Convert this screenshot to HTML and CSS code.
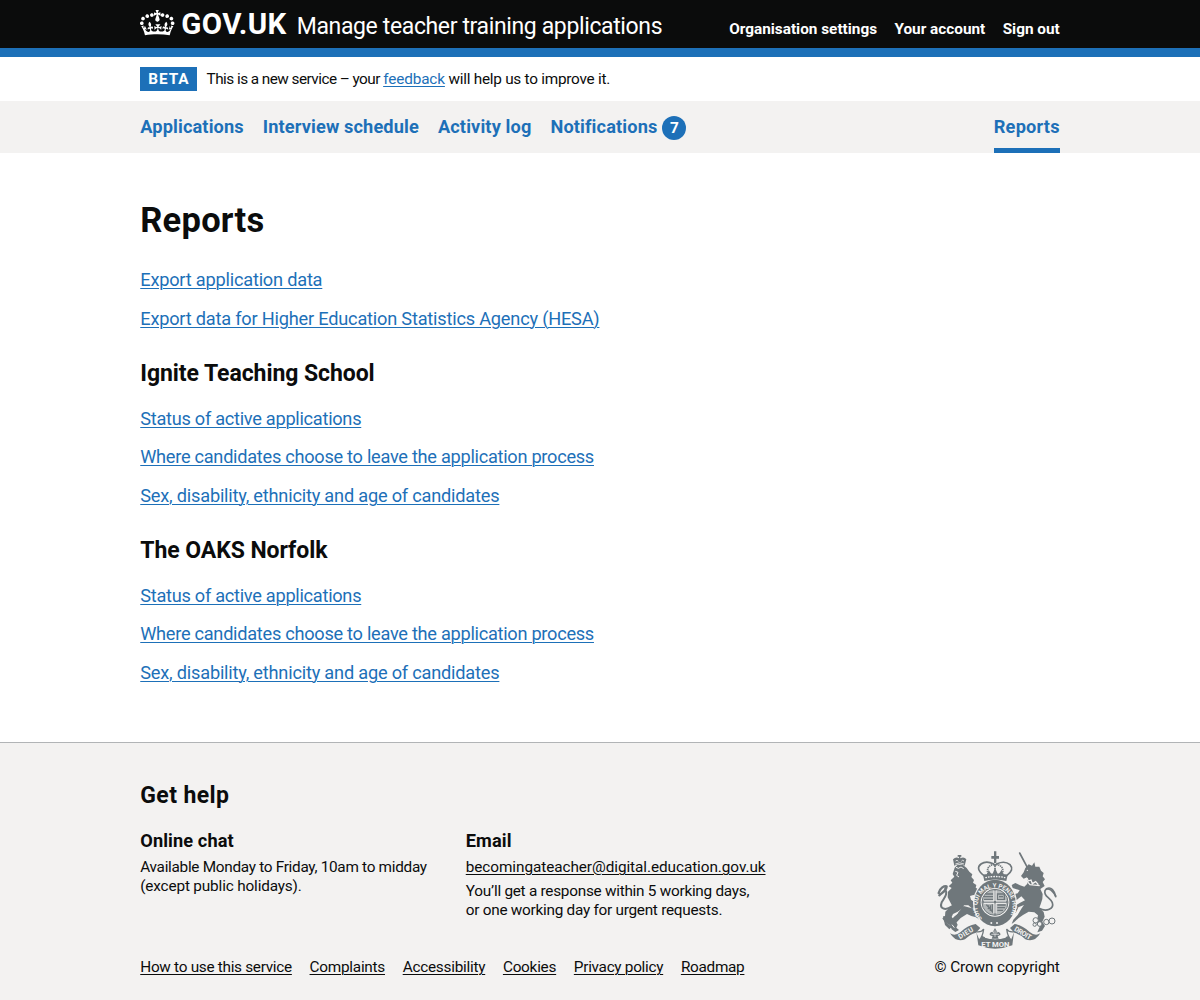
FILE: index.html
```html
<!DOCTYPE html>
<html lang="en">
<head>
<meta charset="utf-8">
<title>Reports - Manage teacher training applications - GOV.UK</title>
<link rel="stylesheet" href="styles.css">
</head>
<body>
<header class="header">
  <div class="container header-inner">
    <a class="logo" href="#">
      <svg class="crown" viewBox="0 0 36 32" aria-hidden="true"><path fill="currentColor" d="M6.7 12.2c1 .4 2.1-.1 2.5-1s-.1-2.1-1-2.5c-1-.4-2.1.1-2.5 1-.4 1 0 2.1 1 2.5m-4.3 2.5c1 .4 2.1-.1 2.5-1s-.1-2.1-1-2.5c-1-.4-2.1.1-2.5 1-.5 1 0 2.1 1 2.5m-1.3 4.8c1 .4 2.1-.1 2.5-1 .4-1-.1-2.1-1-2.5-1-.4-2.1.1-2.5 1-.5 1 0 2.1 1 2.5m10.4-8.4c1 .4 2.1-.1 2.5-1s-.1-2.1-1-2.5c-1-.4-2.1.1-2.5 1s0 2.1 1 2.5m17.2 1.1c-1 .4-2.1-.1-2.5-1s.1-2.1 1-2.5c1-.4 2.1.1 2.5 1 .5 1 0 2.1-1 2.5m4.3 2.5c-1 .4-2.1-.1-2.5-1s.1-2.1 1-2.5c1-.4 2.1.1 2.5 1 .5 1 0 2.1-1 2.5m1.3 4.8c-1 .4-2.1-.1-2.5-1-.4-1 .1-2.1 1-2.5 1-.4 2.1.1 2.5 1 .4 1 0 2.1-1 2.5M23.9 11.1c-1 .4-2.1-.1-2.5-1s.1-2.1 1-2.5c1-.4 2.1.1 2.5 1s0 2.1-1 2.5M18.6 8.8l2.4 1.3V6.5l-2.4.8c-.1-.1-.1-.2-.2-.3s1-3 1-3h-3.4l1 3c-.1.1-.2.2-.2.3-.1.1-2.4-.7-2.4-.7v3.5L17 8.8c.1.1.1.2.2.3l-1.4 4.2c-.1.2-.1.4-.1.6 0 1.1.8 2 1.9 2.2h.7c1-.2 1.9-1.1 1.9-2.1 0-.2 0-.4-.1-.6l-1.4-4.2c-.1-.2 0-.3-.1-.4M17.8 29.1c4.6 0 8.9.3 12.8.9 1.1-4.6 2.4-7.2 3.8-9.1l-2.6-.9c.3 1.3.3 1.9 0 2.8-.4-.4-.8-1.2-1.1-2.4l-1.2 4.2c.8-.5 1.4-.9 2-.9-1.2 2.6-2.7 3.2-3.6 3-1.2-.2-1.7-1.3-1.5-2.2.3-1.3 1.6-1.6 2.2-.1 1.2-2.4-.8-3.1-2.1-2.4 1.9-1.9 2.2-3.6.6-5.7-2.2 1.7-2.2 3.3-1.2 5.6-1.3-1.5-3.3-.7-2.5 1.7.9-1.4 2.1-.5 2 .8-.2 1.2-1.7 2.1-3.7 1.9-2.8-.2-2.9-2.2-2.9-3.7.7-.1 1.9.5 3 2l.4-4.3c-1.1 1.1-2.1 1.4-3.2 1.4.4-1.2 2.1-3 2.1-3h-5.4s1.7 1.9 2.1 3c-1.1 0-2.1-.2-3.2-1.4l.4 4.3c1.1-1.5 2.3-2.1 3-2-.1 1.6-.2 3.5-2.9 3.7-1.9.2-3.5-.7-3.7-1.9-.2-1.3 1-2.2 1.9-.8.7-2.3-1.2-3.1-2.5-1.7 1-2.3 1-3.9-1.1-5.6-1.6 2.1-1.3 3.8.6 5.7-1.3-.7-3.2 0-2.1 2.4.6-1.5 1.9-1.1 2.2.1.2.9-.4 1.9-1.5 2.2-1 .2-2.5-.5-3.7-3 .7 0 1.3.4 2 .9L5 20.4c-.3 1.2-.7 1.9-1.2 2.4-.3-.8-.2-1.5 0-2.8l-2.6.9C2.7 22.8 4 25.4 5.1 30c3.8-.5 8.2-.9 12.7-.9"/></svg>
      <span class="logo-text">GOV.UK</span>
    </a>
    <a class="service-name" href="#">Manage teacher training applications</a>
    <nav class="account-nav">
      <a href="#">Organisation settings</a>
      <a href="#">Your account</a>
      <a href="#">Sign out</a>
    </nav>
  </div>
</header>
<div class="phase container">
  <strong class="tag">BETA</strong>
  <span class="phase-text"><span class="phase-lead">This is a new service – your </span><a href="#">feedback</a> will help us to improve it.</span>
</div>
<nav class="primary-nav">
  <div class="container primary-inner">
    <a href="#">Applications</a>
    <a href="#">Interview schedule</a>
    <a href="#">Activity log</a>
    <a class="with-count" href="#">Notifications <span class="count">7</span></a>
    <a class="current" href="#">Reports</a>
  </div>
</nav>
<main class="container main">
  <h1>Reports</h1>
  <ul class="links">
    <li><a href="#">Export application data</a></li>
    <li><a href="#">Export data for Higher Education Statistics Agency (HESA)</a></li>
  </ul>
  <h2>Ignite Teaching School</h2>
  <ul class="links">
    <li><a class="snug" href="#">Status of active applications</a></li>
    <li><a class="snug" href="#">Where candidates choose to leave the application process</a></li>
    <li><a href="#">Sex, disability, ethnicity and age of candidates</a></li>
  </ul>
  <h2>The OAKS Norfolk</h2>
  <ul class="links">
    <li><a class="snug" href="#">Status of active applications</a></li>
    <li><a class="snug" href="#">Where candidates choose to leave the application process</a></li>
    <li><a href="#">Sex, disability, ethnicity and age of candidates</a></li>
  </ul>
</main>
<footer class="footer">
  <div class="container footer-inner">
    <div class="help">
      <h2>Get help</h2>
      <div class="help-columns">
        <section>
          <h3>Online chat</h3>
          <p class="tight">Available Monday to Friday, 10am to midday<br><span class="loose">(except public holidays).</span></p>
        </section>
        <section>
          <h3>Email</h3>
          <p><a class="email" href="#">becomingateacher@digital.education.gov.uk</a></p>
          <p class="snug">You’ll get a response within 5 working days,<br>or one working day for urgent requests.</p>
        </section>
      </div>
      <div class="meta-links">
        <a class="tight" href="#">How to use this service</a>
        <a href="#">Complaints</a>
        <a href="#">Accessibility</a>
        <a href="#">Cookies</a>
        <a class="tight" href="#">Privacy policy</a>
        <a class="tight" href="#">Roadmap</a>
      </div>
    </div>
    <a class="copyright" href="#">
      <svg class="arms" viewBox="21 15 360 300" aria-hidden="true">
        <defs>
          <path id="garter" d="M157 221A53 55 0 1 1 233 221"/>
        </defs>
        <g fill="none" stroke="#6f777b" stroke-linecap="round" stroke-linejoin="round">
          <!-- tails -->
          <path stroke-width="6" d="M66 184C44 199 28 190 35 172C43 158 55 147 45 132"/>
          <path stroke-width="7" d="M26 144C31 128 42 123 50 124C49 137 38 142 28 151"/>
          <path stroke-width="5" d="M327 190C350 202 373 191 367 173C360 157 340 154 345 137C350 127 364 130 377 153"/>
          <path stroke-width="5" d="M350 131C363 124 374 137 377 155"/>
        </g>
        <!-- lion -->
        <g fill="#6f777b">
          <path d="M74 68L82 60H99L110 69L118 80L127 88L124 96L132 105L129 113L139 120L137 128L147 134L145 144L158 153L153 160L142 154L130 150L120 153L123 164L145 180L139 188L148 196L157 202L154 208L141 206L129 193L115 181L102 181L98 190L83 200L69 207L65 216L77 228L83 239L79 248L87 255L76 261L65 253L60 241L44 230L37 220L45 214L46 200L57 189L67 184L60 170L53 157L54 140L65 129L56 124L67 113L62 106L73 95L68 87Z"/>
          <path d="M101 183L126 190L140 203L153 210L149 226L138 217L124 213L111 207L92 219L78 234L68 220L83 205Z"/>
          <path d="M39 214L52 213L49 232L65 246L58 253L45 240Z"/>
          <path d="M73 62L69 43Q78 34 87 40V35H83V30H94V35H91V40Q102 34 109 43L104 62Q88 54 73 62Z"/>
        </g>
        <path d="M77 48Q81 43 85 49M94 49Q98 43 102 48M76 57Q89 50 102 57" fill="none" stroke="#f3f2f1" stroke-width="2.5"/>
        <path d="M78 67L85 70L93 66L101 71M76 79L84 82L80 91L87 96" fill="none" stroke="#f3f2f1" stroke-width="3"/>
        <path d="M67 216L83 205M66 239L73 248" fill="none" stroke="#f3f2f1" stroke-width="3"/>
        <!-- unicorn -->
        <path d="M269 24L292 67" stroke="#6f777b" stroke-width="5" stroke-linecap="round"/>
        <g fill="#6f777b">
          <path d="M286 69L296 58L306 62L313 52L316 65L328 65L333 77L341 84L338 94L345 103L338 111L344 123L331 132L338 147L337 162L332 178L328 188L341 201L344 215L337 230L345 243L336 257L322 262L329 245L320 230L324 211L313 202L296 200L279 210L266 219L253 231L245 237L250 224L263 210L275 190L282 180L265 187L259 201L249 207L252 185L269 174L285 166L274 154L260 165L246 159L252 148L263 145L269 136L248 129L245 120L256 114L270 121L283 125L292 116L291 97L281 101L273 93L281 82Z"/>
        </g>
        <path d="M286 103L300 119L329 122M291 99L295 108L303 105L307 116L317 110L325 119" fill="none" stroke="#f3f2f1" stroke-width="4"/>
        <circle cx="292" cy="76" r="2" fill="#f3f2f1"/>
        <g fill="#f3f2f1" stroke="#6f777b" stroke-width="3">
          <circle cx="317" cy="226" r="8"/><circle cx="329" cy="237" r="7"/><circle cx="314" cy="239" r="5"/><circle cx="349" cy="231" r="8"/><circle cx="366" cy="228" r="9"/>
        </g>
        <!-- shield and garter -->
        <ellipse cx="195" cy="174" rx="66" ry="73" fill="#f3f2f1"/>
        <ellipse cx="195" cy="174" rx="62" ry="70" fill="#6f777b"/>
        <circle cx="195" cy="172" r="43" fill="#f3f2f1"/>
        <circle cx="195" cy="172" r="39" fill="#b3b7b8" stroke="#6f777b" stroke-width="3"/>
        <g fill="none" stroke="#6f777b" stroke-width="4">
          <path d="M195 134V210M157 171H233"/>
          <path d="M166 147H189M162 155H189M162 163H189M202 147H223V164H202ZM207 155H219M202 180H227M202 188H225M202 196H219M169 179L187 200V178M175 181V193M181 181V198"/>
        </g>
        <path d="M192 137V168H162M198 137V168H228M162 175H192V205M228 175H198V205" fill="none" stroke="#f3f2f1" stroke-width="3"/>
        <text class="arms-motto"><textPath href="#garter">SOIT QUI MAL Y PENSE HONI</textPath></text>
        <circle cx="184" cy="234" r="3" fill="#f3f2f1"/><circle cx="201" cy="234" r="3" fill="#f3f2f1"/>
        <!-- royal crown -->
        <g fill="#f3f2f1" stroke="#6f777b" stroke-width="5">
          <path d="M161 91Q135 71 153 57Q168 46 190 56L195 61L201 56Q225 46 240 59Q254 75 230 92Z"/>
          <path d="M174 87Q167 63 192 58M217 87Q224 63 199 58M195 57V88" fill="none" stroke-dasharray="4 2"/>
        </g>
        <path d="M159 89Q195 80 233 89L229 108Q195 99 163 108ZM192 54V41H184V33H192V19H199V33H207V41H199V54ZM172 87L176 75L184 87M188 86L195 68L203 86M207 86L215 74L220 87" fill="#6f777b"/>
        <path d="M166 98Q195 91 226 98" fill="none" stroke="#f3f2f1" stroke-width="4" stroke-dasharray="5 3"/>
        <!-- motto ribbon -->
        <g fill="#6f777b">
          <path d="M60 265Q75 275 92 261Q114 240 137 237L151 249L138 263Q119 268 105 283Q78 294 60 265Z"/>
          <path d="M331 265Q316 275 299 261Q277 240 254 237L240 249L253 263Q272 268 286 283Q313 294 331 265Z"/>
          <path d="M139 260Q148 270 165 277Q195 288 226 277Q243 271 252 260L247 301Q195 321 145 301Z"/>
        </g>
        <path d="M138 260Q154 263 161 252Q158 276 148 284M253 260Q237 263 230 252Q233 276 243 284" fill="#f3f2f1" stroke="#6f777b" stroke-width="4"/>
        <path d="M165 278V256H227V278Q195 288 165 278Z" fill="#f3f2f1"/>
        <path d="M192 267L187 260Q176 263 180 271L188 274L185 281H206L203 274L211 270Q213 262 203 260L200 267V258L195 249L190 258Z" fill="#6f777b"/>
        <path d="M195 256V276M184 268H207" stroke="#f3f2f1" stroke-width="2"/>
        <text class="arms-words" transform="translate(90 283) rotate(-31)" textLength="49">DIEU</text>
        <text class="arms-words" transform="translate(251 256) rotate(31)" textLength="56">DROIT</text>
        <text class="arms-words base" x="154" y="305" textLength="84">ET MON</text>
      </svg>
      <span>© Crown copyright</span>
    </a>
  </div>
</footer>
</body>
</html>
```
FILE: styles.css
```css
* { box-sizing: border-box; }
body {
  margin: 0;
  background: #fff;
  color: #0b0c0c;
  font: 18.2px/24px Roboto, "Noto Sans", sans-serif;
}
h1, h2, h3, p, ul { margin: 0; padding: 0; }
ul { list-style: none; }
a {
  color: #1d70b8;
  text-decoration-thickness: 1px;
  text-underline-offset: 2px;
}
.container { width: 919.5px; margin: 0 auto; }

.header {
  height: 57px;
  background: #0b0c0c;
  border-bottom: 9px solid #1d70b8;
}
.header a { color: #fff; text-decoration: none; white-space: nowrap; }
.header-inner { display: flex; align-items: flex-start; padding-top: 6px; }
.logo { display: flex; align-items: flex-start; width: 156.5px; }
.crown { display: block; width: 35px; height: 31.1px; margin-right: 6px; }
.logo-text { padding-top: 0.5px; font-size: 29.5px; font-weight: 700; line-height: 35px; letter-spacing: 0.4px; }
.service-name { padding-top: 5.5px; font-size: 23px; line-height: 29px; letter-spacing: -0.37px; }
.account-nav {
  display: flex;
  gap: 17.4px;
  margin-left: auto;
  padding-top: 13.6px;
  font-size: 15.33px;
  font-weight: 700;
  line-height: 19px;
}

.phase { display: flex; align-items: center; height: 43.5px; font-size: 15.33px; line-height: 19px; }
.tag {
  height: 24px;
  margin-right: 9.5px;
  padding: 0 7.5px 0 8px;
  background: #1d70b8;
  color: #fff;
  font-size: 15.33px;
  font-weight: 700;
  line-height: 24px;
  letter-spacing: 0.95px;
}
.phase-text { padding-top: 1px; letter-spacing: -0.25px; }
.phase-lead { letter-spacing: -0.54px; }
.phase-text a { letter-spacing: -0.13px; }

.primary-nav { background: #f3f2f1; }
.primary-inner { display: flex; gap: 19px; height: 52.5px; padding-top: 14.3px; }
.primary-inner a {
  font-weight: 700;
  letter-spacing: 0.125px;
  text-decoration: none;
  white-space: nowrap;
}
.with-count { display: flex; gap: 5px; }
.count {
  width: 24px;
  height: 24px;
  margin-top: 0.9px;
  border-radius: 50%;
  background: #1d70b8;
  color: #fff;
  font-size: 15.33px;
  text-align: center;
}
.primary-inner .current { margin-left: auto; border-bottom: 5px solid #1d70b8; letter-spacing: 0.2px; }

.main { padding: 48px 0 57px; }
h1 { margin-bottom: 29px; font-size: 34.5px; line-height: 38.3px; letter-spacing: 0.25px; }
h2 { font-size: 23px; line-height: 28.7px; letter-spacing: -0.07px; }
.main h2 { margin: 29.2px 0 18.6px; }
.links { display: grid; gap: 14.3px; }
.links a { letter-spacing: -0.21px; }
.links .snug { letter-spacing: -0.28px; }

.footer {
  height: 258px;
  background: #f3f2f1;
  border-top: 1px solid #b1b4b6;
  font-size: 15.33px;
  line-height: 19.17px;
}
.footer a { color: #0b0c0c; }
.footer-inner { display: flex; justify-content: space-between; align-items: flex-end; padding-top: 39px; }
.help h2 { margin-bottom: 18.7px; letter-spacing: 0.4px; }
h3 { margin-bottom: 4.9px; font-size: 18.2px; line-height: 24px; letter-spacing: 0.1px; }
.help-columns { display: flex; gap: 38.5px; }
.help-columns section { min-width: 287px; white-space: nowrap; }
.help-columns p + p { margin-top: 4.8px; }
.meta-links { display: flex; gap: 17.7px; margin-top: 37.9px; letter-spacing: -0.25px; white-space: nowrap; }
.footer .tight { letter-spacing: -0.29px; }
.footer .snug { letter-spacing: -0.26px; }
.footer .loose { letter-spacing: -0.16px; }
.footer .email { letter-spacing: -0.07px; }
.copyright {
  display: flex;
  flex-direction: column;
  align-items: center;
  gap: 8.5px;
  letter-spacing: -0.1px;
  text-decoration: none;
  white-space: nowrap;
}
.arms { display: block; width: 120px; height: 100px; }
.arms text { fill: #f3f2f1; font-family: Roboto, sans-serif; font-weight: 700; letter-spacing: 0; }
.arms .arms-motto { font-size: 18px; }
.arms .arms-words { font-size: 21px; }
.arms .base { font-size: 23px; }
```
